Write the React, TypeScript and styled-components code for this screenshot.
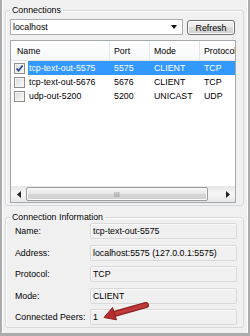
import React from 'react';
import styled, { createGlobalStyle } from 'styled-components';

const connections = [
  { name: 'tcp-text-out-5575', port: '5575', mode: 'CLIENT', protocol: 'TCP', checked: true },
  { name: 'tcp-text-out-5676', port: '5676', mode: 'CLIENT', protocol: 'TCP', checked: false },
  { name: 'udp-out-5200', port: '5200', mode: 'UNICAST', protocol: 'UDP', checked: false },
];

const details = [
  { label: 'Name:', value: 'tcp-text-out-5575' },
  { label: 'Address:', value: 'localhost:5575 (127.0.0.1:5575)' },
  { label: 'Protocol:', value: 'TCP' },
  { label: 'Mode:', value: 'CLIENT' },
  { label: 'Connected Peers:', value: '1' },
];

const App = () => {
  return (
    <>
      <GlobalStyle />
      <Frame>
        <Group>
          <Legend>Connections</Legend>
          <Toolbar>
            <Combo>
              <span>localhost</span>
              <DropArrow />
            </Combo>
            <Button>Refresh</Button>
          </Toolbar>
          <List>
            <Header>
              <HeadCell>Name</HeadCell>
              <HeadCell>Port</HeadCell>
              <HeadCell>Mode</HeadCell>
              <HeadCell>Protocol</HeadCell>
            </Header>
            {connections.map(c => (
              <Row key={c.name}>
                <CheckCell>
                  <Check checked={c.checked}>
                    {c.checked && (
                      <svg width="9" height="9" viewBox="0 0 9 9">
                        <path d="M1.5 4.5 L3.6 6.8 L7.6 1.6" fill="none" stroke="#21418f" strokeWidth="1.6" />
                      </svg>
                    )}
                  </Check>
                </CheckCell>
                <RowBody selected={c.checked}>
                  <NameCell>{c.name}</NameCell>
                  <Cell>{c.port}</Cell>
                  <Cell>{c.mode}</Cell>
                  <Cell>{c.protocol}</Cell>
                </RowBody>
              </Row>
            ))}
            <Spacer />
            <ScrollBar>
              <ScrollBtn>
                <svg width="4" height="7" viewBox="0 0 4 7"><path d="M4 0 L0 3.5 L4 7 Z" fill="#222" /></svg>
              </ScrollBtn>
              <Thumb>
                <Grip>|||</Grip>
              </Thumb>
              <Track />
              <ScrollBtn>
                <svg width="4" height="7" viewBox="0 0 4 7"><path d="M0 0 L4 3.5 L0 7 Z" fill="#222" /></svg>
              </ScrollBtn>
            </ScrollBar>
          </List>
        </Group>

        <InfoGroup>
          <Legend>Connection Information</Legend>
          <InfoRows>
            {details.map(d => (
              <InfoRow key={d.label}>
                <InfoLabel>{d.label}</InfoLabel>
                <ValueBox>{d.value}</ValueBox>
              </InfoRow>
            ))}
          </InfoRows>
        </InfoGroup>

        <Pointer width="50" height="24" viewBox="0 0 50 24">
          <line x1="46" y1="5" x2="14" y2="14" stroke="#8e2222" strokeWidth="6" strokeLinecap="round" />
          <line x1="46" y1="5" x2="14" y2="14" stroke="#c03a3a" strokeWidth="3.5" strokeLinecap="round" />
          <polygon points="4,17.5 12.5,7.5 16.5,19.8" fill="#b52e2e" stroke="#8e2222" strokeWidth="1" />
        </Pointer>
      </Frame>
    </>
  );
};

export default App;

const GlobalStyle = createGlobalStyle`
  html, body {
    margin: 0;
    padding: 0;
    background: #fff;
  }
  body {
    font-family: "Liberation Sans", Arial, sans-serif;
    font-size: 8.8px;
    color: #000;
  }
`;

const Frame = styled.div`
  position: relative;
  width: 250px;
  height: 336px;
  box-sizing: border-box;
  background: #f0f0f0;
  border: 2px solid #acacac;
  border-top: none;
  border-bottom-width: 3px;
  box-shadow: inset 1px 0 0 #fff, inset -1px 0 0 #fff;
  padding: 4px 4px 0 3px;
  display: flex;
  flex-direction: column;
`;

const Group = styled.fieldset`
  margin: 0;
  min-width: 0;
  padding: 0 7px 2px 4px;
  border: 1px solid #d5d9dc;
  border-radius: 3px;
  box-shadow: inset 1px 1px 0 #fff;
`;

const InfoGroup = styled(Group)`
  margin-top: 5px;
  padding-right: 6px;
`;

const Legend = styled.legend`
  padding: 0 2px;
  margin: 0;
  line-height: 12px;
  height: 12px;
`;

const Toolbar = styled.div`
  display: flex;
  align-items: flex-end;
  gap: 4px;
  margin-top: 3px;
`;

const Combo = styled.div`
  flex: 1;
  height: 16px;
  box-sizing: border-box;
  background: #fff;
  border: 1px solid #abadb3;
  display: flex;
  align-items: center;
  justify-content: space-between;
  padding: 0 5px 0 2px;
`;

const DropArrow = styled.span`
  width: 0;
  height: 0;
  border-left: 3.5px solid transparent;
  border-right: 3.5px solid transparent;
  border-top: 4px solid #111;
`;

const Button = styled.button`
  width: 48px;
  height: 15px;
  margin-right: 1px;
  padding: 0;
  box-sizing: border-box;
  font: inherit;
  color: #000;
  border: 1px solid #707070;
  border-radius: 3px;
  background: linear-gradient(#f2f2f2 0%, #ebebeb 45%, #dddddd 50%, #cfcfcf 100%);
  box-shadow: inset 0 0 0 1px #fcfcfc;
`;

const List = styled.div`
  margin-top: 5px;
  height: 163px;
  box-sizing: border-box;
  border: 1px solid #a3a8ae;
  background: #fff;
  display: flex;
  flex-direction: column;
  overflow: hidden;
`;

const Header = styled.div`
  display: grid;
  grid-template-columns: 99px 40px 50px 60px;
  height: 20px;
  flex-shrink: 0;
  background: linear-gradient(#ffffff, #f6f7f8);
  border-bottom: 1px solid #e5e5e5;
  box-sizing: border-box;
`;

const HeadCell = styled.div`
  display: flex;
  align-items: center;
  padding-left: 6px;
  border-right: 1px solid #e3e5e8;
  white-space: nowrap;
  &:nth-child(n + 2) {
    padding-left: 4px;
  }
`;

const Row = styled.div`
  display: flex;
  height: 14px;
  flex-shrink: 0;
`;

const CheckCell = styled.div`
  width: 17px;
  flex-shrink: 0;
  display: flex;
  align-items: center;
  padding-left: 3px;
  box-sizing: border-box;
`;

const Check = styled.div<{ checked: boolean }>`
  width: 11px;
  height: 11px;
  box-sizing: border-box;
  border: 1px solid #8f8f8f;
  background: linear-gradient(135deg, #dcdcdc, #fbfbfb);
  box-shadow: inset 0 0 0 1px #f4f4f4;
  display: flex;
  align-items: center;
  justify-content: center;
`;

const RowBody = styled.div<{ selected: boolean }>`
  display: grid;
  grid-template-columns: 82px 40px 50px 60px;
  align-items: center;
  background: ${props => (props.selected ? '#3399ff' : 'transparent')};
  color: ${props => (props.selected ? '#fff' : '#000')};
  flex: 1;
`;

const Cell = styled.div`
  padding-left: 4px;
  white-space: nowrap;
`;

const NameCell = styled(Cell)`
  padding-left: 1px;
`;

const Spacer = styled.div`
  flex: 1;
`;

const ScrollBar = styled.div`
  height: 16px;
  flex-shrink: 0;
  display: flex;
  align-items: stretch;
  background: linear-gradient(#e6e6e6, #f4f4f4 40%, #f4f4f4 60%, #e6e6e6);
`;

const ScrollBtn = styled.div`
  width: 15px;
  display: flex;
  align-items: center;
  justify-content: center;
`;

const Thumb = styled.div`
  width: 182px;
  margin: 1px 0;
  box-sizing: border-box;
  border: 1px solid #9c9c9c;
  border-radius: 2px;
  background: linear-gradient(#f6f6f6, #e6e6e6 50%, #d6d6d6 51%, #cfcfcf);
  box-shadow: inset 0 0 0 1px #fafafa;
  display: flex;
  align-items: center;
  justify-content: center;
`;

const Grip = styled.span`
  font-size: 6px;
  letter-spacing: 0.5px;
  color: #666;
`;

const Track = styled.div`
  flex: 1;
`;

const InfoRows = styled.div`
  display: flex;
  flex-direction: column;
  gap: 5.5px;
`;

const InfoRow = styled.div`
  display: flex;
  align-items: center;
  height: 16px;
`;

const InfoLabel = styled.div`
  width: 80px;
  padding-left: 5px;
  box-sizing: border-box;
  flex-shrink: 0;
`;

const ValueBox = styled.div`
  flex: 1;
  height: 16px;
  box-sizing: border-box;
  border: 1px solid #d9d9d9;
  border-radius: 2px;
  background: #f0f0f0;
  box-shadow: inset 1px 1px 0 #fafafa;
  display: flex;
  align-items: center;
  padding-left: 2px;
  white-space: nowrap;
  overflow: hidden;
`;

const Pointer = styled.svg`
  position: absolute;
  left: 98px;
  top: 300px;
`;
